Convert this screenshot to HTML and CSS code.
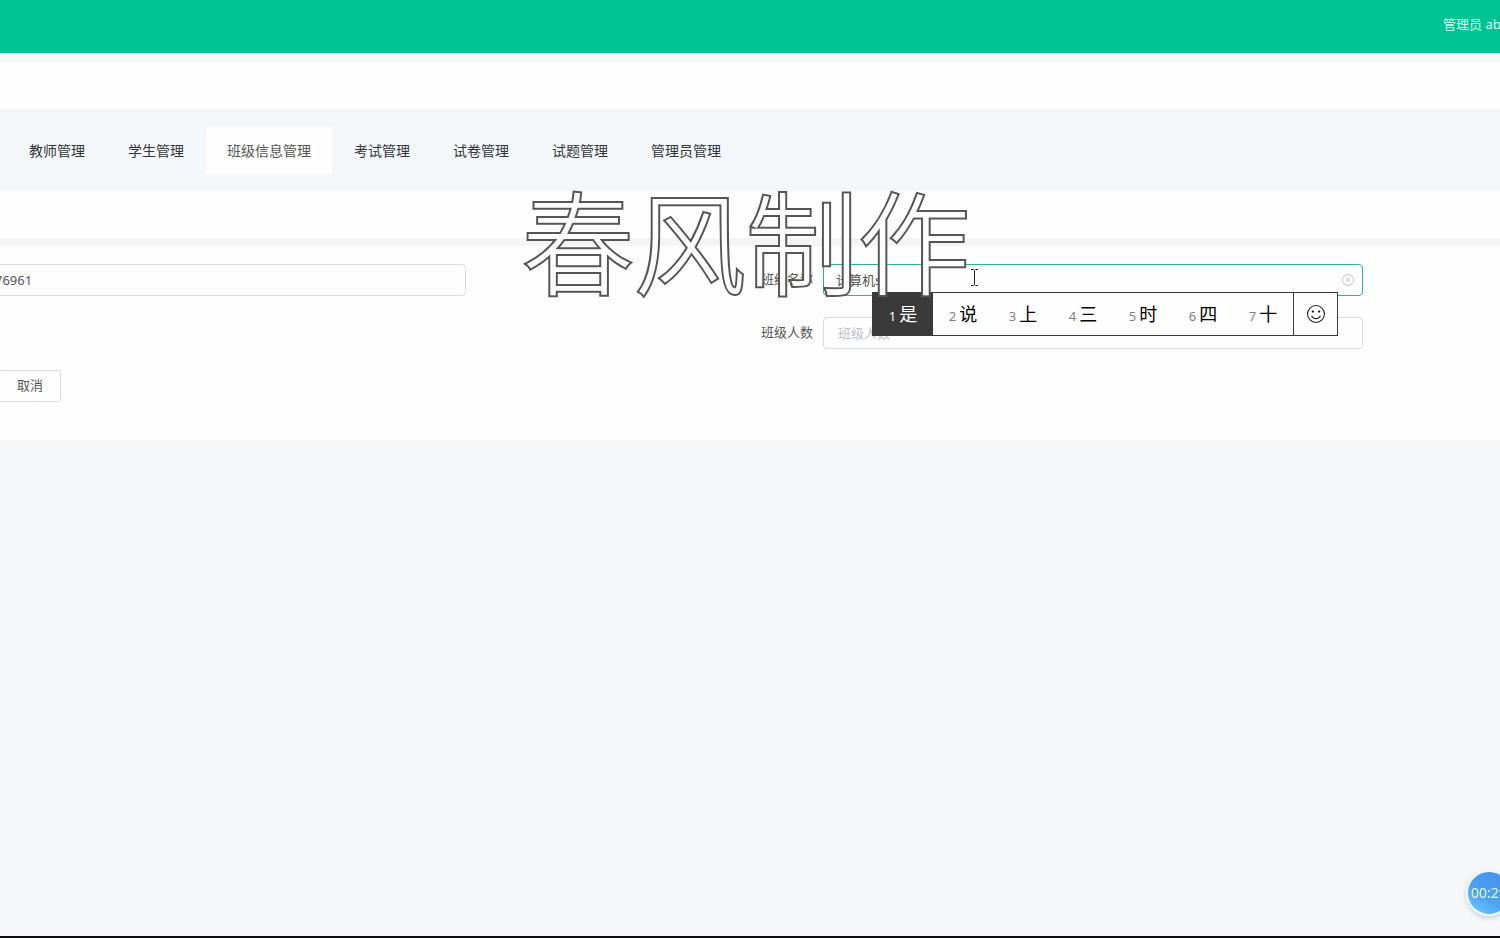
FILE: index.html
```html
<!DOCTYPE html>
<html lang="zh-CN">
<head>
<meta charset="utf-8">
<title>班级信息管理</title>
<link rel="stylesheet" href="styles.css">
</head>
<body>
<header class="topbar"><span class="user">管理员 abo</span></header>
<div class="crumbs"></div>
<nav class="tabs">
  <a href="#">教师管理</a>
  <a href="#">学生管理</a>
  <a href="#" class="active">班级信息管理</a>
  <a href="#">考试管理</a>
  <a href="#">试卷管理</a>
  <a href="#">试题管理</a>
  <a href="#">管理员管理</a>
</nav>
<main>
  <div class="card-title"></div>
  <form class="card">
    <div class="grid">
      <input class="box" type="text" value="76961" aria-label="班级编号">
      <label for="name">班级名称</label>
      <div class="field">
        <input class="box focused" id="name" type="text" value="计算机s">
        <button class="clear" type="button" aria-label="清空">
          <svg viewBox="0 0 14 14" width="14" height="14"><circle cx="7" cy="7" r="5.5"/><path d="M5 5l4 4M9 5l-4 4"/></svg>
        </button>
        <div class="ime">
          <span class="cand picked"><i>1</i>是</span>
          <span class="cand"><i>2</i>说</span>
          <span class="cand"><i>3</i>上</span>
          <span class="cand"><i>4</i>三</span>
          <span class="cand"><i>5</i>时</span>
          <span class="cand"><i>6</i>四</span>
          <span class="cand"><i>7</i>十</span>
          <button class="emoji" type="button" aria-label="表情">
            <svg viewBox="0 0 18 18" width="20" height="20"><circle cx="9" cy="9" r="7.600"/><path d="M5 10.500c1.200 3.600 6.800 3.600 8 0"/><circle class="eye" cx="6.200" cy="6.800" r="1"/><circle class="eye" cx="11.800" cy="6.800" r="1"/></svg>
          </button>
        </div>
        <svg class="cursor" viewBox="0 0 9 17" width="9" height="17"><path d="M1 .5h2.500l1 1 1-1H8M1 16.500h2.500l1-1 1 1H8M4.500 1.500v14"/></svg>
      </div>
      <label class="second" for="count">班级人数</label>
      <input class="box" id="count" type="text" placeholder="班级人数">
    </div>
    <button class="cancel" type="button">取消</button>
  </form>
  <div class="watermark">春风制作</div>
</main>
<div class="timer">00:29</div>
<div class="taskbar"></div>
</body>
</html>
```
FILE: styles.css
```css
* { box-sizing: border-box; }
body {
  margin: 0;
  min-height: 100vh;
  overflow: hidden;
  position: relative;
  background: #f5f7f9;
  color: #555;
  font: 13px/20px "Noto Sans", "Noto Sans CJK SC", sans-serif;
}
input, button { font: inherit; color: inherit; }
.topbar {
  height: 53px;
  display: flex;
  align-items: center;
  justify-content: flex-end;
  padding-bottom: 6px;
  background: #00c292;
  color: #d9fff4;
}
.user { width: 57px; white-space: nowrap; }
.crumbs { height: 47px; margin-top: 9px; background: #fefefe; }
.tabs {
  display: flex;
  gap: 1px;
  padding: 18px 8px 17px;
  background: #f4f7f9;
}
.tabs a {
  padding: 0 21px;
  font-size: 14px;
  line-height: 47px;
  color: #30363a;
  text-decoration: none;
}
.tabs .active { background: #fefefe; color: #555; }
main { position: relative; }
.card-title { height: 47px; background: #fefefe; }
.card {
  padding: 18px 137px 38px 0;
  border-top: 8px solid #f4f4f5;
  background: #fdfdfd;
}
.grid {
  display: grid;
  grid-template-columns: 486fr 357fr 540fr;
  row-gap: 21px;
  align-items: center;
  margin-left: -20px;
}
.grid label { padding: 0 10px 2px 0; text-align: right; }
.second { grid-column: 2; }
.field { position: relative; }
.box {
  display: block;
  width: 100%;
  height: 32px;
  padding: 0 14px 1px;
  border: 1px solid #d8dbe0;
  border-radius: 4px;
  background: #fefefe;
  outline: 0;
}
.field .box { padding-left: 12px; }
.box::placeholder { color: #bcc0c6; opacity: 1; }
.focused { border-color: #2fb493; }
.clear {
  position: absolute;
  top: 9px;
  right: 8px;
  width: 14px;
  height: 14px;
  padding: 0;
  border: 0;
  background: none;
}
svg { display: block; fill: none; stroke: #222; }
.clear svg { stroke: #c4c7cc; }
.ime {
  position: absolute;
  z-index: 1;
  top: 28px;
  left: 49px;
  display: flex;
  height: 44px;
  border: 1px solid #3a3a3a;
  background: #fefefe;
  color: #000;
}
.cand {
  width: 60px;
  display: flex;
  align-items: center;
  justify-content: center;
  gap: 3px;
  font-size: 18px;
}
.cand i { padding-top: 3px; font-size: 13px; font-style: normal; color: #808080; }
.picked, .picked i { background: #3a3a3a; color: #fff; }
.emoji {
  width: 44px;
  display: grid;
  place-items: center;
  padding: 0;
  border: 0;
  border-left: 1px solid #3a3a3a;
  background: none;
}
.emoji .eye { fill: #111; stroke: none; }
.cursor { position: absolute; top: 5px; left: 147px; }
.cancel {
  display: block;
  height: 32px;
  margin: 21px 0 0 -2px;
  padding: 0 17px 3px 18px;
  border: 1px solid #d8dbe0;
  border-radius: 3px;
  background: #fefefe;
}
.watermark {
  position: absolute;
  z-index: 2;
  top: 0;
  left: 522px;
  font-family: "Noto Sans CJK SC", sans-serif;
  font-size: 112px;
  font-weight: 300;
  line-height: 94px;
  white-space: nowrap;
  color: #fdfdfd;
  -webkit-text-stroke: 4px #555;
  paint-order: stroke fill;
  pointer-events: none;
}
.timer {
  position: fixed;
  right: -12px;
  bottom: 22px;
  width: 46px;
  height: 46px;
  border: 2px solid #e9fbff;
  border-radius: 50%;
  background: linear-gradient(215deg, #418be8, #4da4f4 60%, #74cdfa);
  box-shadow: 0 2px 5px #c9ced6;
  color: #e8f7ff;
  font-size: 14px;
  line-height: 42px;
  padding-left: 3px;
}
.taskbar { position: fixed; inset: auto 0 0; height: 2px; background: #0c0c10; }
```
